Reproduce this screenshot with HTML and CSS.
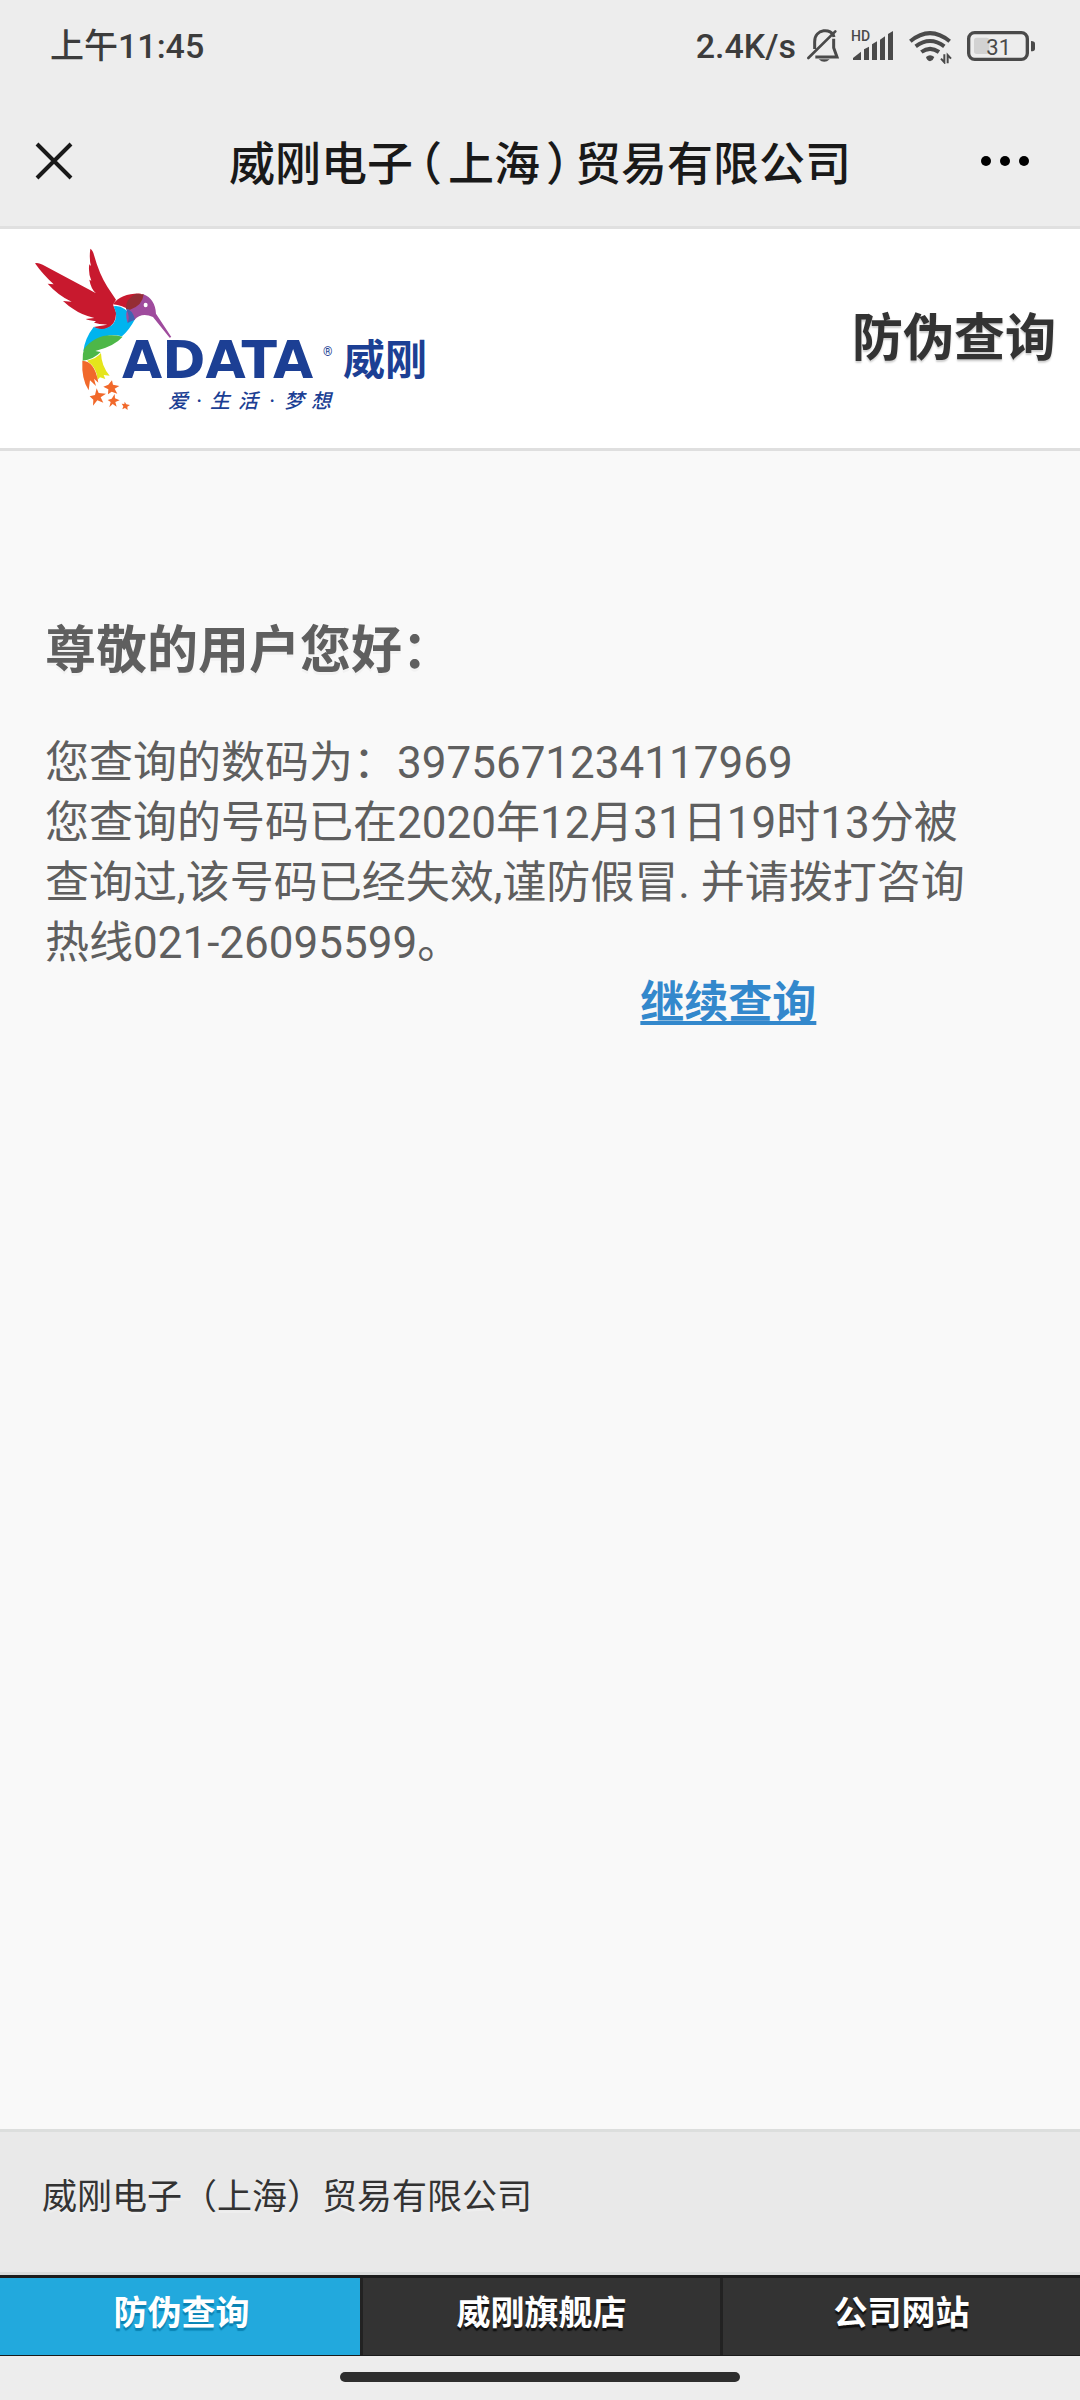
FILE: index.html
```html
<!DOCTYPE html>
<html lang="zh-CN">
<head>
    <meta charset="UTF-8">
    <meta name="viewport" content="width=device-width, initial-scale=1.0">
    <title>威刚电子(上海)贸易有限公司</title>
    <link rel="stylesheet" href="styles.css">
</head>
<body>
    <div class="status-bar">
        <span>上午11:45</span>
        <div class="status-icons">
            <span>2.4K/s</span>
            <svg width="34" height="36" viewBox="378 81 102 108">
                <path d="M404 144V122C404 82 456 80 462 108M461 113V140L471 168H406" fill="none" stroke="#4a4a4a" stroke-width="9"/>
                <path d="M385 171L466 91" stroke="#4a4a4a" stroke-width="8" stroke-linecap="round"/>
                <path d="M416 175H449Q433 190 416 175Z" fill="#4a4a4a"/>
            </svg>
            <svg width="44" height="36" viewBox="510 81 132 108">
                <g fill="#4a4a4a">
                    <path d="M519 177V171L543 152V177Z"/>
                    <path d="M552 177V145L567 137V177Z"/>
                    <path d="M576 177V130L591 121V177Z"/>
                    <path d="M600 177V116L615 106V177Z"/>
                    <path d="M624 177V99L639 90V177Z"/>
                </g>
                <text x="513" y="120" class="hd">HD</text>
            </svg>
            <svg width="52" height="36" viewBox="672 81 156 108">
                <g fill="none" stroke="#4a4a4a" stroke-width="12">
                    <path d="M691 121Q750 72 809 121"/>
                    <path d="M707 136Q750 104 793 136"/>
                    <path d="M724 153Q750 134 777 153"/>
                </g>
                <path d="M738 168Q750 157 763 168Q760 178 750 181Q740 178 738 168Z" fill="#4a4a4a"/>
                <path d="M793 160V184L783 173M803 187V162L813 173" fill="none" stroke="#4a4a4a" stroke-width="6"/>
            </svg>
            <svg width="70" height="36" viewBox="858 81 210 108">
                <rect x="866" y="95" width="176" height="80" rx="18" fill="none" stroke="#4a4a4a" stroke-width="10"/>
                <rect x="882" y="110" width="46" height="49" rx="8" fill="#d2d2d2"/>
                <path d="M1053 120Q1065 120 1065 128V143Q1065 151 1053 151Z" fill="#4a4a4a"/>
                <text x="956" y="161" class="battery-level">31</text>
            </svg>
        </div>
    </div>

    <div class="title-bar">
        <button type="button" class="close-btn" aria-label="关闭">
            <svg width="40" height="40" viewBox="0 0 40 40">
                <path d="M3 3L37 37M37 3L3 37" stroke="#191919" stroke-width="4"/>
            </svg>
        </button>
        <div class="title">威刚电子<span class="paren">（</span>上海<span class="paren">）</span>贸易有限公司</div>
        <button type="button" class="more-btn" aria-label="更多">
            <svg width="50" height="40" viewBox="0 0 50 40">
                <circle cx="6" cy="20" r="5"/>
                <circle cx="25" cy="20" r="5"/>
                <circle cx="44" cy="20" r="5"/>
            </svg>
        </button>
    </div>

    <header class="header">
        <svg class="logo" width="420" height="200" viewBox="0 8 420 200" role="img" aria-label="ADATA 威刚">
            <g transform="scale(0.3333)">
                <!-- wings -->
                <path fill="#c8192e" d="M211 53Q219 58 222 72Q238 130 262 167L288 206L279 221Q283 228 288 244Q290 283 256 294Q234 297 221 288L262 281Q235 279 222 275L228 271Q207 268 197 264L223 261Q183 251 160 234Q145 225 129 210L155 212Q115 194 83 158L101 160Q68 130 45 97Q52 93 68 101L228 187Q213 174 208 146L214 149Q204 126 208 100L213 105Q207 84 211 53Z"/>
                <!-- body -->
                <path fill="#00b4ef" d="M281 226Q310 220 345 265Q328 297 306 316Q244 301 190 361Q195 321 221 288Q250 302 275 283Q298 262 281 226Z"/>
                <path fill="#4db748" d="M188 389Q187 369 192 354Q234 299 308 317Q284 345 226 360L242 363Q220 386 188 389Z"/>
                <path fill="#e5e51b" d="M201 389Q231 382 243 366Q244 405 269 434L251 432L256 444L240 439L233 446Q231 410 201 389Z"/>
                <path fill="#f1692b" d="M187 389Q225 390 235 455L222 443L228 465L210 448L206 478Q184 445 187 389Z"/>
                <!-- head -->
                <path fill="#c8192e" d="M279 220Q304 186 363 188L329 239Q308 222 279 220Z"/>
                <path fill="#9f4b9d" d="M370 190Q405 203 408 248L454 318L449 320L399 258Q365 242 343 267L322 273Q306 220 370 190Z"/>
                <path fill="#952d35" d="M318 234Q316 202 348 188L371 190Q368 224 330 236Z"/>
                <path fill="#4262b0" d="M318 233Q337 235 345 265L322 277Q332 258 318 233Z"/>
                <ellipse cx="377" cy="222" rx="6" ry="7" fill="#fff"/>
                <!-- stars -->
                <g fill="#f1692b">
                    <path d="M230 472L236 486L258 488L242 499L250 515L232 508L219 524L220 506L209 496L225 492Z"/>
                    <path d="M276 448L279 461L298 465L284 473L292 488L275 482L264 490L265 475L250 467L265 461Z"/>
                    <path d="M284 489L285 502L299 508L286 513L290 527L278 519L268 529L272 513L263 507L275 503Z"/>
                    <path d="M314 512L319 520L330 522L322 527L323 537L315 531L307 535L310 526L305 518L313 519Z"/>
                </g>
            </g>
            <text x="102" y="147" class="logo-brand">ADATA</text>
            <text x="303" y="125" class="logo-reg">®</text>
            <text x="323" y="144" class="logo-name">威刚</text>
            <g class="logo-slogan">
                <text x="158" y="177">爱</text>
                <text x="179" y="177">·</text>
                <text x="200" y="177">生</text>
                <text x="228" y="177">活</text>
                <text x="252" y="177">·</text>
                <text x="274" y="177">梦</text>
                <text x="301" y="177">想</text>
            </g>
        </svg>
        <h1>防伪查询</h1>
    </header>

    <main class="content">
        <h2>尊敬的用户您好：</h2>
        <p>您查询的数码为：3975671234117969</p>
        <p>您查询的号码已在2020年12月31日19时13分被查询过,该号码已经失效,谨防假冒. 并请拨打咨询热线021-26095599。</p>
        <a href="#" class="continue-link">继续查询</a>
    </main>

    <footer class="footer">威刚电子（上海）贸易有限公司</footer>

    <nav class="nav">
        <a href="#" class="active">防伪查询</a>
        <a href="#">威刚旗舰店</a>
        <a href="#">公司网站</a>
    </nav>

    <div class="home-area">
        <div class="home-bar"></div>
    </div>
</body>
</html>
```

FILE: styles.css
```css
* {
    box-sizing: border-box;
}
body {
    font-family: Roboto, "Noto Sans CJK SC", sans-serif;
    margin: 0;
    min-height: 100vh;
    display: flex;
    flex-direction: column;
    background: #f9f9f9;
    color: #333;
}
h1, h2, p {
    margin: 0;
}
svg {
    display: block;
}

/* phone bars */
.status-bar {
    display: flex;
    justify-content: space-between;
    align-items: center;
    height: 92px;
    padding: 0 44px 0 50px;
    background: #ededed;
    color: #3c3c3c;
    font-size: 34px;
    font-weight: 500;
    line-height: 40px;
}
.status-icons {
    display: flex;
    align-items: center;
    gap: 10px;
}
.hd {
    font-size: 42px;
    font-weight: 500;
    fill: #4a4a4a;
}
.battery-level {
    font-size: 66px;
    font-weight: 400;
    fill: #4a4a4a;
    text-anchor: middle;
}
.title-bar {
    display: grid;
    grid-template-columns: 1fr auto 1fr;
    align-items: center;
    height: 137px;
    padding: 4px 50px 0 34px;
    background: #ededed;
    border-bottom: 3px solid #e0e0e0;
}
.title {
    padding: 6px 0 0 16px;
    color: #191919;
    font-size: 46px;
    font-weight: 500;
    line-height: 60px;
}
.paren {
    margin: 0 6px;
    font-feature-settings: "halt";
}
.close-btn,
.more-btn {
    padding: 0;
    border: none;
    background: none;
    cursor: pointer;
}
.close-btn {
    justify-self: start;
}
.more-btn {
    justify-self: end;
}

/* page header */
.header {
    display: flex;
    justify-content: space-between;
    align-items: center;
    height: 222px;
    padding: 0 24px 0 20px;
    background: #fff;
    border-bottom: 3px solid #dfdfdf;
}
.header h1 {
    font-size: 51px;
    line-height: 60px;
    text-shadow: 0 2px 2px rgba(0, 0, 0, 0.2);
}
.logo text {
    fill: #1c3f94;
}
.logo-brand {
    font-family: "DejaVu Sans", sans-serif;
    font-size: 52px;
    font-weight: bold;
}
.logo-reg {
    font-size: 12px;
}
.logo-name {
    font-size: 42px;
    font-weight: bold;
}
.logo-slogan {
    font-size: 20px;
    font-style: italic;
    font-weight: 500;
    text-anchor: middle;
}

.content {
    flex: 1;
    padding: 170px 90px 40px 45px;
    color: #5f5f5f;
    font-size: 44px;
    line-height: 60px;
}
.content h2 {
    margin-bottom: 52px;
    font-size: 51px;
    line-height: 60px;
    text-shadow: 0 3px 0 #f2f2f2;
}
.continue-link {
    display: block;
    width: max-content;
    margin-left: 63%;
    color: #3388cc;
    font-weight: bold;
}

.footer {
    height: 146px;
    padding: 36px 42px;
    background: #e9e9e9;
    border-top: 3px solid #dcdedd;
    border-bottom: 3px solid #dadcdc;
    font-size: 35px;
    line-height: 60px;
    text-shadow: 0 3px 0 #eee;
}
.nav {
    display: grid;
    grid-template-columns: repeat(3, 1fr);
    height: 81px;
    border-top: 3px solid #1c1c1c;
    border-bottom: 1px solid #1c1c1c;
}
.nav a {
    padding-top: 5px;
    background: #333;
    border-left: 3px solid #222;
    color: #fff;
    font-size: 34px;
    font-weight: bold;
    line-height: 60px;
    text-align: center;
    text-decoration: none;
    text-shadow: 0 3px 1px #111;
}
.nav a.active {
    background: #22a9dd;
    border-left-color: #22a9dd;
    text-shadow: 0 3px 1px #0b83b3;
}
.home-area {
    height: 44px;
    padding-top: 16px;
    background: #ededed;
}
.home-bar {
    width: 37%;
    height: 10px;
    margin: 0 auto;
    border-radius: 5px;
    background: #2e2e2e;
}
```
